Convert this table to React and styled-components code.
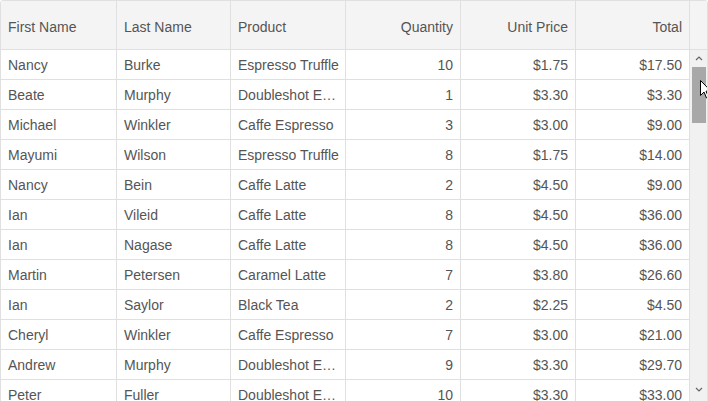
import React from 'react';
import styled, { createGlobalStyle } from 'styled-components';

const GlobalStyle = createGlobalStyle`
  html, body {
    margin: 0;
    padding: 0;
    background: #fff;
    overflow: hidden;
    height: 401px;
  }
`;

const COLS = '116px 114px 115px 115px 115px 114px';

const columns = [
  { key: 'first', title: 'First Name' },
  { key: 'last', title: 'Last Name' },
  { key: 'product', title: 'Product' },
  { key: 'qty', title: 'Quantity', right: true },
  { key: 'price', title: 'Unit Price', right: true },
  { key: 'total', title: 'Total', right: true },
];

const rows = [
  ['Nancy', 'Burke', 'Espresso Truffle', '10', '$1.75', '$17.50'],
  ['Beate', 'Murphy', 'Doubleshot Espresso', '1', '$3.30', '$3.30'],
  ['Michael', 'Winkler', 'Caffe Espresso', '3', '$3.00', '$9.00'],
  ['Mayumi', 'Wilson', 'Espresso Truffle', '8', '$1.75', '$14.00'],
  ['Nancy', 'Bein', 'Caffe Latte', '2', '$4.50', '$9.00'],
  ['Ian', 'Vileid', 'Caffe Latte', '8', '$4.50', '$36.00'],
  ['Ian', 'Nagase', 'Caffe Latte', '8', '$4.50', '$36.00'],
  ['Martin', 'Petersen', 'Caramel Latte', '7', '$3.80', '$26.60'],
  ['Ian', 'Saylor', 'Black Tea', '2', '$2.25', '$4.50'],
  ['Cheryl', 'Winkler', 'Caffe Espresso', '7', '$3.00', '$21.00'],
  ['Andrew', 'Murphy', 'Doubleshot Espresso', '9', '$3.30', '$29.70'],
  ['Peter', 'Fuller', 'Doubleshot Espresso', '10', '$3.30', '$33.00'],
];

const Grid = styled.div`
  position: relative;
  width: 708px;
  height: 420px;
  box-sizing: border-box;
  border: 1px solid #e0e0e0;
  border-radius: 3px;
  font-family: "Liberation Sans", Arial, sans-serif;
  font-size: 14px;
  color: #555;
  display: flex;
  flex-direction: column;
  overflow: hidden;
`;

const HeaderRow = styled.div`
  display: grid;
  grid-template-columns: ${COLS} 1fr;
  height: 49px;
  background: #f4f4f4;
  border-bottom: 1px solid #e0e0e0;
  box-sizing: border-box;
`;

const HeaderCell = styled.div`
  display: flex;
  align-items: center;
  justify-content: ${p => (p.$right ? 'flex-end' : 'flex-start')};
  padding: 4px 7px 0 7px;
  border-right: 1px solid #e0e0e0;
  box-sizing: border-box;
  white-space: nowrap;
`;

const Filler = styled.div``;

const BodyArea = styled.div`
  display: flex;
  flex: 1;
  min-height: 0;
`;

const Rows = styled.div`
  display: flex;
  flex-direction: column;
  width: 689px;
`;

const Row = styled.div`
  display: grid;
  grid-template-columns: ${COLS};
  height: 30px;
  flex-shrink: 0;
  border-bottom: 1px solid #e0e0e0;
  box-sizing: border-box;
`;

const Cell = styled.div`
  padding: 2px ${p => (p.$right ? '7px' : '4px')} 0 7px;
  line-height: 27px;
  text-align: ${p => (p.$right ? 'right' : 'left')};
  border-right: 1px solid #e0e0e0;
  box-sizing: border-box;
  white-space: nowrap;
  overflow: hidden;
  text-overflow: ellipsis;
`;

const ScrollBar = styled.div`
  width: 17px;
  background: #f1f1f1;
  display: flex;
  flex-direction: column;
  align-items: center;
  position: relative;
`;

const ArrowBtn = styled.div`
  height: 17px;
  width: 17px;
  display: flex;
  align-items: center;
  justify-content: center;
  flex-shrink: 0;
`;

const Thumb = styled.div`
  width: 14px;
  height: 56px;
  background: #a8a8a8;
  flex-shrink: 0;
`;

const Track = styled.div`
  flex: 1;
`;

const BottomArrow = styled(ArrowBtn)`
  position: absolute;
  top: 331px;
  left: 0;
`;

const Cursor = styled.svg`
  position: absolute;
  left: 699px;
  top: 79px;
`;

const Chevron = ({ down }) => (
  <svg width="8" height="5" viewBox="0 0 8 5">
    <path
      d={down ? 'M1 1 L4 4 L7 1' : 'M1 4 L4 1 L7 4'}
      fill="none"
      stroke="#666"
      strokeWidth="1.2"
    />
  </svg>
);

export default function App() {
  return (
    <>
      <GlobalStyle />
      <Grid>
        <HeaderRow>
          {columns.map(c => (
            <HeaderCell key={c.key} $right={c.right}>
              {c.title}
            </HeaderCell>
          ))}
          <Filler />
        </HeaderRow>
        <BodyArea>
          <Rows>
            {rows.map((r, i) => (
              <Row key={i}>
                {r.map((v, j) => (
                  <Cell key={j} $right={columns[j].right}>
                    {v}
                  </Cell>
                ))}
              </Row>
            ))}
          </Rows>
          <ScrollBar>
            <ArrowBtn>
              <Chevron />
            </ArrowBtn>
            <Thumb />
            <Track />
            <BottomArrow>
              <Chevron down />
            </BottomArrow>
          </ScrollBar>
        </BodyArea>
        <Cursor width="12" height="19" viewBox="0 0 12 19">
          <path
            d="M0.5 0.5 L0.5 15.5 L4 12 L6.5 18 L8.5 17 L6 11.2 L11 11.2 Z"
            fill="#fff"
            stroke="#000"
            strokeWidth="1"
          />
        </Cursor>
      </Grid>
    </>
  );
}
